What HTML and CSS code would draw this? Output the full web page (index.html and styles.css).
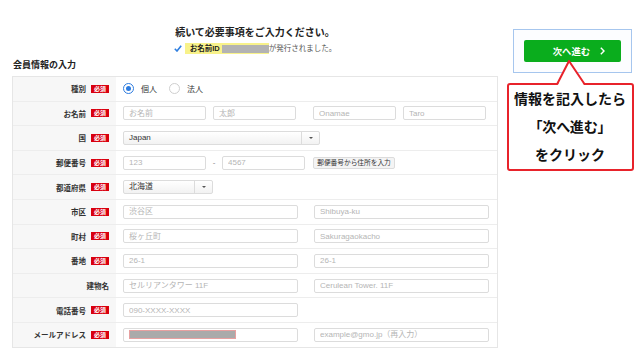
FILE: index.html
```html
<!DOCTYPE html>
<html lang="ja">
<head>
<meta charset="utf-8">
<title>会員情報の入力</title>
<link rel="stylesheet" href="styles.css">
</head>
<body>
<div class="page">
  <main class="main">
    <h1 class="title">続いて必要事項をご入力ください。</h1>
    <p class="notice">
      <svg class="check" viewBox="0 0 8 7"><polyline points="0.8,3.8 3,6 7.2,0.8" fill="none" stroke="#2f7fe0" stroke-width="1.6"/></svg>
      <span class="hl"><b>お名前ID</b><span class="masked"></span></span>が発行されました。
    </p>
    <h2 class="section">会員情報の入力</h2>
    <div class="form">
      <div class="row">
        <div class="label">種別<span class="req">必須</span></div>
        <div class="field">
          <span class="radio on"></span><span class="radio-text">個人</span>
          <span class="radio gap-r"></span><span class="radio-text">法人</span>
        </div>
      </div>
      <div class="row">
        <div class="label">お名前<span class="req">必須</span></div>
        <div class="field">
          <input class="input" placeholder="お名前">
          <input class="input g7" placeholder="太郎">
          <input class="input g17" placeholder="Onamae">
          <input class="input g7" placeholder="Taro">
        </div>
      </div>
      <div class="row">
        <div class="label">国<span class="req">必須</span></div>
        <div class="field">
          <div class="select w197"><span class="val">Japan</span><span class="arrow"><i></i></span></div>
        </div>
      </div>
      <div class="row">
        <div class="label">郵便番号<span class="req">必須</span></div>
        <div class="field">
          <input class="input" placeholder="123">
          <span class="dash">-</span>
          <input class="input" placeholder="4567">
          <button class="zip-btn">郵便番号から住所を入力</button>
        </div>
      </div>
      <div class="row">
        <div class="label">都道府県<span class="req">必須</span></div>
        <div class="field">
          <div class="select w90"><span class="val">北海道</span><span class="arrow"><i></i></span></div>
        </div>
      </div>
      <div class="row">
        <div class="label">市区<span class="req">必須</span></div>
        <div class="field">
          <input class="input wide" placeholder="渋谷区">
          <input class="input wide g16" placeholder="Shibuya-ku">
        </div>
      </div>
      <div class="row">
        <div class="label">町村<span class="req">必須</span></div>
        <div class="field">
          <input class="input wide" placeholder="桜ヶ丘町">
          <input class="input wide g16" placeholder="Sakuragaokacho">
        </div>
      </div>
      <div class="row">
        <div class="label">番地<span class="req">必須</span></div>
        <div class="field">
          <input class="input wide" placeholder="26-1">
          <input class="input wide g16" placeholder="26-1">
        </div>
      </div>
      <div class="row">
        <div class="label">建物名</div>
        <div class="field">
          <input class="input wide" placeholder="セルリアンタワー 11F">
          <input class="input wide g16" placeholder="Cerulean Tower. 11F">
        </div>
      </div>
      <div class="row">
        <div class="label">電話番号<span class="req">必須</span></div>
        <div class="field">
          <input class="input wide" placeholder="090-XXXX-XXXX">
        </div>
      </div>
      <div class="row">
        <div class="label">メールアドレス<span class="req">必須</span></div>
        <div class="field">
          <div class="input wide filled"><span class="masked-mail"></span></div>
          <input class="input wide g16" placeholder="example@gmo.jp（再入力）">
        </div>
      </div>
    </div>
  </main>
  <aside class="aside">
    <div class="next-box">
      <button class="next">次へ進む<svg class="chev" viewBox="0 0 5 8"><polyline points="0.8,0.8 4,4 0.8,7.2" fill="none" stroke="#fff" stroke-width="1.4"/></svg></button>
    </div>
    <div class="callout">
      <svg class="tail" viewBox="0 0 32 26"><polygon points="2.7,26 14,2 29,26" fill="#fff"/><polyline points="2.2,25 14,2 29.5,25" fill="none" stroke="#e8232b" stroke-width="2" stroke-linejoin="round"/></svg>
      <p>情報を記入したら</p>
      <p class="palt">「次へ進む」</p>
      <p>をクリック</p>
    </div>
  </aside>
</div>
</body>
</html>
```
FILE: styles.css
```css
body {
  margin: 0;
  font-family: "Liberation Sans", "Noto Sans CJK JP", sans-serif;
  color: #333;
  background: #fff;
}
.page {
  display: flex;
  padding-left: 12px;
  width: 640px;
  box-sizing: border-box;
}
.main {
  width: 486px;
  padding-top: 25px;
}
.title {
  margin: 0;
  font-size: 10px;
  line-height: 15px;
  font-weight: bold;
  text-align: center;
  color: #222;
}
.notice {
  margin: 3px 0 0;
  font-size: 7.5px;
  line-height: 11px;
  display: flex;
  justify-content: center;
  align-items: center;
  color: #555;
}
.check {
  width: 8px;
  height: 7px;
  margin-right: 3px;
}
.hl {
  background: #f8f28a;
  display: flex;
  align-items: center;
  height: 11px;
  padding-left: 5px;
}
.hl b { color: #222; }
.masked {
  width: 47px;
  height: 8px;
  background: #b3b3b3;
  margin-left: 2px;
}
.section {
  margin: 5px 0 0 1px;
  font-size: 9px;
  line-height: 12px;
  font-weight: bold;
  color: #222;
}
.form {
  margin-top: 5px;
  border: 1px solid #e6e6e6;
}
.row {
  display: flex;
  height: 23.6px;
  border-top: 1px solid #ededed;
}
.row:first-child { border-top: 0; }
.label {
  width: 103px;
  flex: none;
  background: #f7f7f7;
  display: flex;
  justify-content: flex-end;
  align-items: center;
  padding-right: 7px;
  box-sizing: border-box;
  font-size: 7.5px;
  font-weight: bold;
  color: #333;
}
.req {
  background: #d9000f;
  color: #fff;
  font-size: 6px;
  width: 18px;
  height: 8px;
  line-height: 8px;
  text-align: center;
  margin-left: 5px;
}
.field {
  flex: 1;
  display: flex;
  align-items: center;
  padding-left: 7px;
}
.input {
  width: 83px;
  height: 14px;
  box-sizing: border-box;
  border: 1px solid #dcdcdc;
  border-radius: 2px;
  font-family: inherit;
  font-size: 8px;
  padding: 0 5px;
  margin: 0;
  color: #333;
  background: #fff;
  outline: none;
}
.input::placeholder { color: #b5b5b5; }
.wide { width: 175px; }
.g7 { margin-left: 7px; }
.g16 { margin-left: 16px; }
.g17 { margin-left: 17px; }
.filled {
  display: flex;
  align-items: center;
}
.masked-mail {
  width: 107px;
  height: 9px;
  background: #aaa;
  border: 1px solid #e7a0a0;
  box-sizing: border-box;
}
.radio {
  width: 11px;
  height: 11px;
  border-radius: 50%;
  border: 1px solid #cfcfcf;
  box-sizing: border-box;
  background: #fff;
  display: flex;
  align-items: center;
  justify-content: center;
}
.radio.on { border: 1.2px solid #2d7ce0; }
.radio.on::after {
  content: "";
  width: 5px;
  height: 5px;
  border-radius: 50%;
  background: #2d7ce0;
}
.radio-text {
  margin-left: 7px;
  font-size: 8px;
  color: #333;
}
.gap-r { margin-left: 12px; }
.select {
  display: flex;
  height: 14px;
  box-sizing: border-box;
  border: 1px solid #dcdcdc;
  border-radius: 2px;
  background: linear-gradient(#fff, #f2f2f2);
  font-size: 8px;
  color: #333;
}
.w197 { width: 197px; }
.w90 { width: 90px; }
.select .val {
  flex: 1;
  padding-left: 5px;
  line-height: 12px;
}
.select .arrow {
  width: 17px;
  border-left: 1px solid #dcdcdc;
  display: flex;
  align-items: center;
  justify-content: center;
}
.select .arrow i {
  width: 0;
  height: 0;
  border-left: 2px solid transparent;
  border-right: 2px solid transparent;
  border-top: 2px solid #555;
}
.dash {
  width: 16px;
  text-align: center;
  font-size: 8px;
  color: #888;
}
.zip-btn {
  margin-left: 8px;
  width: 82px;
  height: 12px;
  padding: 0;
  border: 1px solid #dcdcdc;
  border-radius: 2px;
  background: #f4f4f4;
  font-family: inherit;
  font-size: 6.7px;
  line-height: 10px;
  color: #333;
}
.aside {
  width: 127px;
  margin-left: 8.5px;
  padding-top: 29px;
}
.next-box {
  margin-left: 6px;
  width: 119px;
  height: 44px;
  box-sizing: border-box;
  border: 1.5px solid #a6c6ee;
  display: flex;
  align-items: center;
  justify-content: center;
  background: #fcfdff;
}
.next {
  width: 97px;
  height: 22px;
  background: #0aad1d;
  border: 0;
  border-radius: 2px;
  color: #fff;
  font-family: inherit;
  font-weight: bold;
  font-size: 9.4px;
  display: flex;
  align-items: center;
  justify-content: center;
  padding: 0 0 0 14px;
  gap: 10px;
}
.chev {
  width: 5px;
  height: 8px;
}
.callout {
  position: relative;
  margin-top: 10px;
  height: 88px;
  border: 2px solid #e8232b;
  border-radius: 3px;
  box-sizing: border-box;
  text-align: center;
  background: #fff;
}
.callout p {
  margin: 0;
  font-size: 14px;
  line-height: 28px;
  font-weight: bold;
  color: #111;
}
.callout .palt { font-feature-settings: "palt"; }
.tail {
  position: absolute;
  left: 46px;
  top: -26px;
  width: 32px;
  height: 26px;
}
```
